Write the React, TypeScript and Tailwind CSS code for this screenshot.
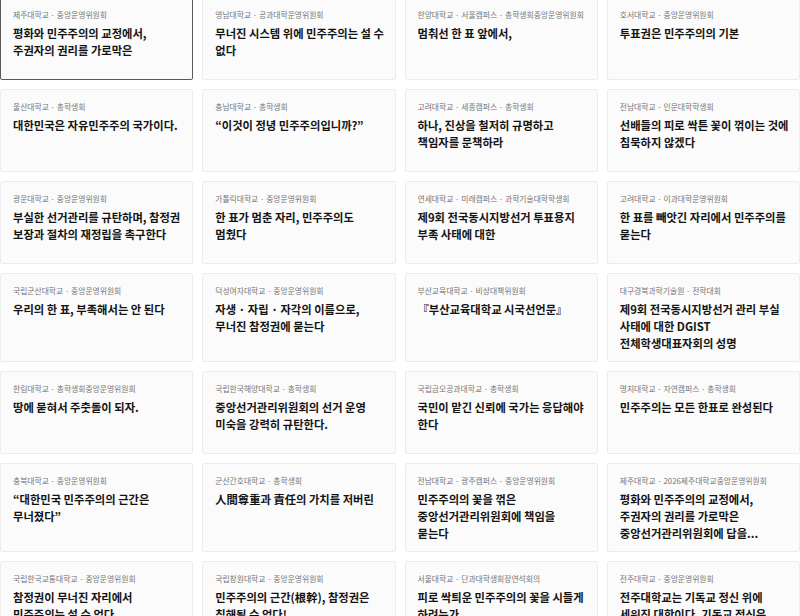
import React from "react";

type Item = { meta: string; lines: string[]; active?: boolean };

const items: Item[] = [
  { meta: "제주대학교 · 중앙운영위원회", lines: ["평화와 민주주의의 교정에서,", "주권자의 권리를 가로막은"], active: true },
  { meta: "영남대학교 · 공과대학운영위원회", lines: ["무너진 시스템 위에 민주주의는 설 수", "없다"] },
  { meta: "한양대학교 · 서울캠퍼스 · 총학생회중앙운영위원회", lines: ["멈춰선 한 표 앞에서,"] },
  { meta: "호서대학교 · 중앙운영위원회", lines: ["투표권은 민주주의의 기본"] },
  { meta: "울산대학교 · 총학생회", lines: ["대한민국은 자유민주주의 국가이다."] },
  { meta: "충남대학교 · 총학생회", lines: ["“이것이 정녕 민주주의입니까?”"] },
  { meta: "고려대학교 · 세종캠퍼스 · 총학생회", lines: ["하나, 진상을 철저히 규명하고", "책임자를 문책하라"] },
  { meta: "전남대학교 · 인문대학학생회", lines: ["선배들의 피로 싹튼 꽃이 꺾이는 것에", "침묵하지 않겠다"] },
  { meta: "광운대학교 · 중앙운영위원회", lines: ["부실한 선거관리를 규탄하며, 참정권", "보장과 절차의 재정립을 촉구한다"] },
  { meta: "가톨릭대학교 · 중앙운영위원회", lines: ["한 표가 멈춘 자리, 민주주의도", "멈췄다"] },
  { meta: "연세대학교 · 미래캠퍼스 · 과학기술대학학생회", lines: ["제9회 전국동시지방선거 투표용지", "부족 사태에 대한"] },
  { meta: "고려대학교 · 이과대학운영위원회", lines: ["한 표를 빼앗긴 자리에서 민주주의를", "묻는다"] },
  { meta: "국립군산대학교 · 중앙운영위원회", lines: ["우리의 한 표, 부족해서는 안 된다"] },
  { meta: "덕성여자대학교 · 중앙운영위원회", lines: ["자생 · 자립 · 자각의 이름으로,", "무너진 참정권에 묻는다"] },
  { meta: "부산교육대학교 · 비상대책위원회", lines: ["『부산교육대학교 시국선언문』"] },
  { meta: "대구경북과학기술원 · 전학대회", lines: ["제9회 전국동시지방선거 관리 부실", "사태에 대한 DGIST", "전체학생대표자회의 성명"] },
  { meta: "한림대학교 · 총학생회중앙운영위원회", lines: ["땅에 묻혀서 주춧돌이 되자."] },
  { meta: "국립한국해양대학교 · 총학생회", lines: ["중앙선거관리위원회의 선거 운영", "미숙을 강력히 규탄한다."] },
  { meta: "국립금오공과대학교 · 총학생회", lines: ["국민이 맡긴 신뢰에 국가는 응답해야", "한다"] },
  { meta: "명지대학교 · 자연캠퍼스 · 총학생회", lines: ["민주주의는 모든 한표로 완성된다"] },
  { meta: "충북대학교 · 중앙운영위원회", lines: ["“대한민국 민주주의의 근간은", "무너졌다”"] },
  { meta: "군산간호대학교 · 총학생회", lines: ["人間尊重과 責任의 가치를 저버린"] },
  { meta: "전남대학교 · 광주캠퍼스 · 중앙운영위원회", lines: ["민주주의의 꽃을 꺾은", "중앙선거관리위원회에 책임을", "묻는다"] },
  { meta: "제주대학교 · 2026제주대학교중앙운영위원회", lines: ["평화와 민주주의의 교정에서,", "주권자의 권리를 가로막은", "중앙선거관리위원회에 답을..."] },
  { meta: "국립한국교통대학교 · 중앙운영위원회", lines: ["참정권이 무너진 자리에서", "민주주의는 설 수 없다."] },
  { meta: "국립창원대학교 · 중앙운영위원회", lines: ["민주주의의 근간(根幹), 참정권은", "침해될 수 없다!"] },
  { meta: "서울대학교 · 단과대학생회장연석회의", lines: ["피로 싹틔운 민주주의의 꽃을 시들게", "하려는가"] },
  { meta: "전주대학교 · 중앙운영위원회", lines: ["전주대학교는 기독교 정신 위에", "세워진 대학이다. 기독교 정신은", "이 땅의 민주주의와..."] },
];

function Card({ item }: { item: Item }) {
  return (
    <div
      className={
        "min-h-[83px] rounded-[2px] border px-[12px] pt-[11px] pb-[9px] bg-[#fbfbfb] " +
        (item.active ? "border-[#5a5a5a]" : "border-[#ececec]")
      }
    >
      <div className="text-[7.8px] leading-[12px] text-[#767676] whitespace-nowrap">{item.meta}</div>
      <div className="mt-[4px] text-[11.3px] leading-[17px] font-bold text-[#141414]">
        {item.lines.map((l, i) => (
          <div key={i} className="whitespace-nowrap">
            {l}
          </div>
        ))}
      </div>
    </div>
  );
}

export default function App() {
  return (
    <div
      className="w-[800px] h-[616px] overflow-hidden bg-white"
      style={{ fontFamily: '"Noto Sans CJK KR", "Noto Sans", sans-serif' }}
    >
      <div className="-mt-[3px] grid grid-cols-4 gap-[9px]">
        {items.map((it, i) => (
          <Card key={i} item={it} />
        ))}
      </div>
    </div>
  );
}
